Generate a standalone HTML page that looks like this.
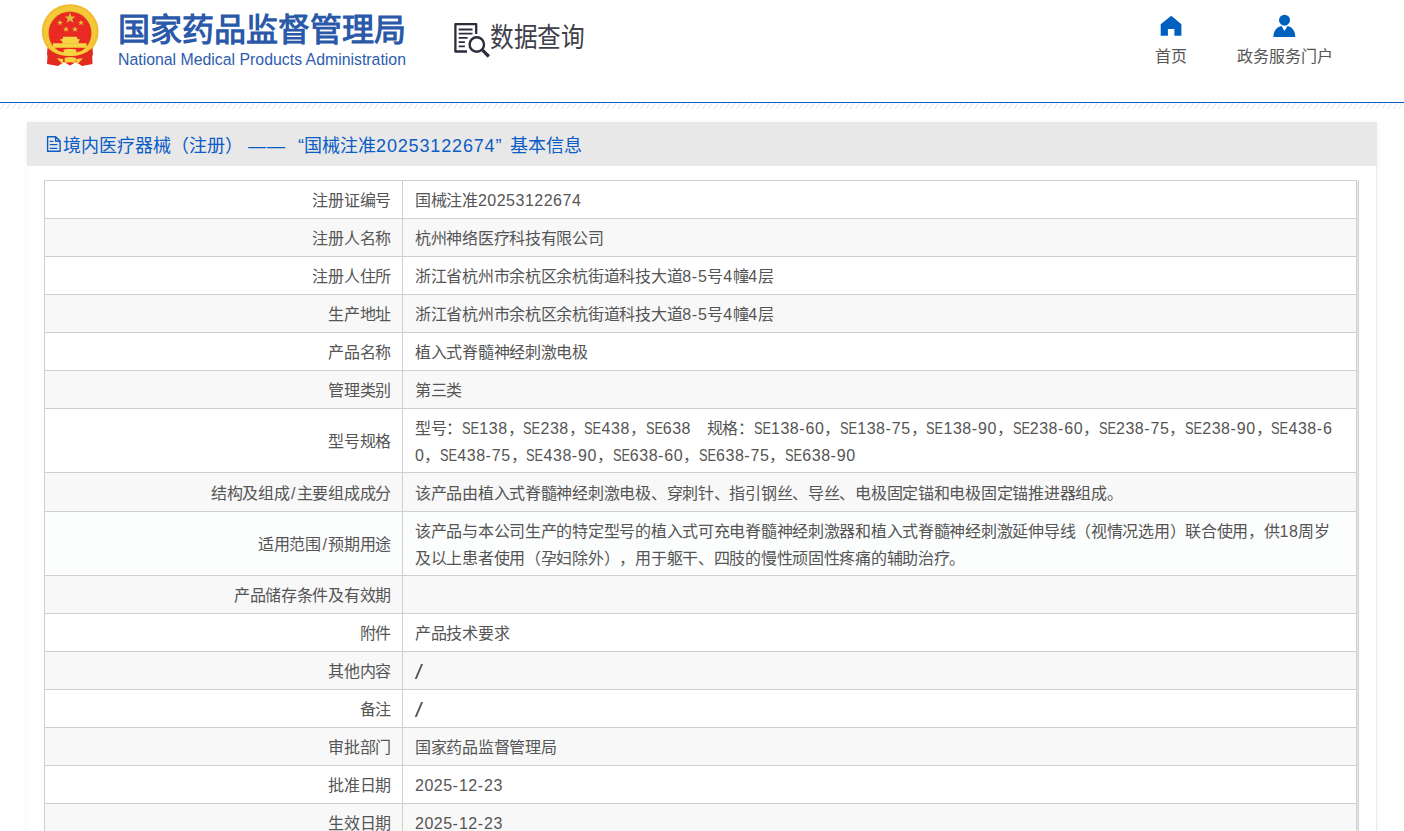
<!DOCTYPE html>
<html lang="zh-CN">
<head>
<meta charset="utf-8">
<style>
html,body{margin:0;padding:0;}
body{width:1404px;height:831px;overflow:hidden;background:#fff;font-family:"Liberation Sans",sans-serif;position:relative;text-spacing-trim:space-all;}
.abs{position:absolute;}
#title{position:absolute;left:118px;top:9.5px;font-size:32px;font-weight:900;color:#2a59a9;line-height:40px;white-space:nowrap;}
#entitle{position:absolute;left:118px;top:50.5px;font-size:15.85px;color:#2d5cae;line-height:18px;white-space:nowrap;}
#dq{position:absolute;left:490px;top:18.5px;font-size:26px;color:#40404a;line-height:36px;white-space:nowrap;transform:scale(0.91,1.04);transform-origin:0 0;}
.nav{position:absolute;top:48px;font-size:16px;color:#555;line-height:18px;white-space:nowrap;}
#panel{position:absolute;left:27px;top:122px;width:1349px;height:740px;background:#fff;box-shadow:0 0 6px rgba(0,0,0,0.05);border-right:1px solid #e9e9e9;}
#ph{position:absolute;left:0;top:0;width:1350px;height:44px;background:#e8e8e8;}
#phtxt{position:absolute;left:36px;top:11.5px;font-size:18px;color:#0b5cc4;line-height:24px;white-space:nowrap;}
.q{display:inline-block;width:18px;}
.dg{letter-spacing:0.85px;}
#tbl{position:absolute;left:17px;top:58px;border-collapse:collapse;width:1313px;table-layout:fixed;}
#tbl td{border:1px solid #d1ced1;font-size:16px;color:#555;line-height:26.5px;padding:7px 11px 3px 12px;word-break:break-all;letter-spacing:-0.28px;}
#tbl td.l{text-align:right;}
#tbl tr{height:38px;}
#tbl tr:nth-child(even) td{background:#f8f8f8;}
#tbl tr.hv td{background:#fcfdfd;}
.n{letter-spacing:0.5px;}
.h{letter-spacing:1px;}
.sl{padding:0 1.5px;}
.sv{display:inline-block;width:1.5px;height:14.5px;background:#555;transform:skewX(-23deg);vertical-align:-1.5px;margin-left:2.5px;}
b.se{display:inline-block;width:17.2px;font-weight:normal;letter-spacing:0;white-space:nowrap;}
b.se i{display:inline-block;font-style:normal;transform:scaleX(0.8);transform-origin:0 0;}
#rb1{position:absolute;left:1330px;top:59px;width:1px;height:720px;background:#e3e7ef;}
#rb2{position:absolute;left:1331px;top:58px;width:1px;height:720px;background:#d1ced1;}
</style>
</head>
<body>
<svg class="abs" style="left:0;top:0" width="1404" height="110" viewBox="0 0 1404 110">
  <defs>
    <pattern id="hp" x="0" y="103" width="5.66" height="6" patternUnits="userSpaceOnUse">
      <line x1="5.2" y1="0" x2="0.7" y2="6" stroke="#e4e4e4" stroke-width="1"/>
    </pattern>
  </defs>
  <rect x="0" y="103" width="1404" height="6" fill="url(#hp)"/>
  <rect x="0" y="102" width="1404" height="1" fill="#0a60c2"/>
  <!-- emblem -->
  <g>
    <path d="M48,48 L47,64 L58,66 L64,62 L70,65.5 L76,62 L82,66 L92.5,64 L92,48 Z" fill="#e42a1f"/>
    <ellipse cx="70.2" cy="31.5" rx="28.4" ry="27.3" fill="#f0bb2e"/>
    <ellipse cx="70.2" cy="31.5" rx="26.5" ry="25.5" fill="#f5c83a"/>
    <circle cx="70" cy="33" r="21.9" fill="#d8b82a"/>
    <circle cx="70" cy="33" r="21.3" fill="#e92a22"/>
    <path d="M47.5,48 Q58,57 70,56 Q82,57 92.5,48 L93,55 Q84,60 76,59.5 L70,61 L64,59.5 Q56,60 47,55 Z" fill="#e42a1f"/>
    <path d="M48.5,47 Q58,55.5 70,55.5 Q82,55.5 91.5,47 L90.5,45.5 Q82,53 70,53 Q58,53 49.5,45.5 Z" fill="#f4cf3a"/>
    <g fill="#dcc23a">
      <polygon points="70,12.5 71.4,16.4 75.4,16.5 72.2,18.9 73.4,22.8 70,20.5 66.6,22.8 67.8,18.9 64.6,16.5 68.6,16.4"/>
      <polygon points="60,19.8 60.8,21.8 62.9,21.9 61.2,23.2 61.9,25.3 60,24.1 58.1,25.3 58.8,23.2 57.1,21.9 59.2,21.8"/>
      <polygon points="81,19.8 81.8,21.8 83.9,21.9 82.2,23.2 82.9,25.3 81,24.1 79.1,25.3 79.8,23.2 78.1,21.9 80.2,21.8"/>
      <polygon points="66,26.3 66.8,28.3 68.9,28.4 67.2,29.7 67.9,31.8 66,30.6 64.1,31.8 64.8,29.7 63.1,28.4 65.2,28.3"/>
      <polygon points="75,26.3 75.8,28.3 77.9,28.4 76.2,29.7 76.9,31.8 75,30.6 73.1,31.8 73.8,29.7 72.1,28.4 74.2,28.3"/>
    </g>
    <g fill="#f7d444">
      <path d="M63.2,36.8 H76.9 L77.5,39 H79.6 L79.2,41 H78.7 V43.5 H62.3 V41 H60.9 L60.5,39 H62.6 Z"/>
      <path d="M53,43.3 H86.5 L86.8,47.8 H53.2 Z"/>
      <path d="M63.5,50 Q66,48.5 70,49 Q74,48.5 76.5,50 L76,55.5 Q73,54.5 70,56 Q67,54.5 64,55.5 Z"/>
      <path d="M64.6,58 Q70,56 76,58 L75.5,62.8 Q70,61.5 64.8,62.8 Z"/>
      <path d="M56.8,58.3 L63.2,59 L62.8,64.3 Z M76,59 L82.9,58.3 L77.2,64.3 Z"/>
    </g>
  </g>
  <!-- data query icon -->
  <g fill="none" stroke="#2c2c3c" stroke-linecap="butt">
    <path d="M476.2,34 V24.2 H455.4 V51.5 H467" stroke-width="2.3" stroke-linejoin="round"/>
    <path d="M458.7,29.5 H472.5 M458.7,33.7 H472.5 M458.7,37.9 H467.6 M458.7,42.1 H464.9 M458.7,46.3 H464.9" stroke-width="1.8"/>
    <circle cx="476.8" cy="44.5" r="7.2" stroke-width="2.4"/>
    <path d="M482.5,50.2 L488.8,56.5" stroke-width="3.2"/>
  </g>
  <!-- home -->
  <path d="M1171.3,15.8 L1181.4,24.2 V35.8 H1174.4 V28.9 H1167.9 V35.8 H1160.7 V24.2 Z" fill="#0060c0"/>
  <!-- person -->
  <circle cx="1284.5" cy="20.2" r="5.5" fill="#0060c0"/>
  <path d="M1273.4,36.9 C1273.4,30.5 1277.5,26.8 1281.5,26.1 L1284.5,31 L1287.5,26.1 C1291.5,26.8 1295.3,30.5 1295.3,36.9 Z" fill="#0060c0"/>
</svg>
<div id="title">国家药品监督管理局</div>
<div id="entitle">National Medical Products Administration</div>
<div id="dq">数据查询</div>
<div class="nav" style="left:1155px">首页</div>
<div class="nav" style="left:1237px">政务服务门户</div>
<div id="panel">
  <div id="ph">
    <svg class="abs" style="left:19px;top:13px" width="16" height="18" viewBox="0 0 16 18">
      <path d="M1.6,1.7 H9.6 L14.1,6 V16.2 H1.6 Z M9.6,1.7 V6.3 H14.1" fill="none" stroke="#0b5cc4" stroke-width="1.4" stroke-linejoin="round"/>
      <path d="M4.2,6.4 H7 M4.2,9.6 H11 M4.2,13.3 H11" stroke="#0b5cc4" stroke-width="1.2" stroke-linecap="round"/>
    </svg>
    <div id="phtxt">境内医疗器械（注册） <span style="letter-spacing:1px">——</span><span class="q" style="text-align:right">“</span>国械注准<span class="dg">20253122674</span><span class="q" style="width:15px">”</span>基本信息</div>
  </div>
  <table id="tbl">
    <colgroup><col style="width:358px"><col></colgroup>
    <tr><td class="l">注册证编号</td><td>国械注准<span class="n">20253122674</span></td></tr>
    <tr><td class="l">注册人名称</td><td>杭州神络医疗科技有限公司</td></tr>
    <tr><td class="l">注册人住所</td><td>浙江省杭州市余杭区余杭街道科技大道<span class="n">8<span class="h">-</span>5</span>号<span class="n">4</span>幢<span class="n">4</span>层</td></tr>
    <tr><td class="l">生产地址</td><td>浙江省杭州市余杭区余杭街道科技大道<span class="n">8<span class="h">-</span>5</span>号<span class="n">4</span>幢<span class="n">4</span>层</td></tr>
    <tr><td class="l">产品名称</td><td>植入式脊髓神经刺激电极</td></tr>
    <tr><td class="l">管理类别</td><td>第三类</td></tr>
    <tr><td class="l">型号规格</td><td>型号：<b class="se"><i>SE</i></b><span class="n">138</span>，<b class="se"><i>SE</i></b><span class="n">238</span>，<b class="se"><i>SE</i></b><span class="n">438</span>，<b class="se"><i>SE</i></b><span class="n">638</span>　规格：<b class="se"><i>SE</i></b><span class="n">138<span class="h">-</span>60</span>，<b class="se"><i>SE</i></b><span class="n">138<span class="h">-</span>75</span>，<b class="se"><i>SE</i></b><span class="n">138<span class="h">-</span>90</span>，<b class="se"><i>SE</i></b><span class="n">238<span class="h">-</span>60</span>，<b class="se"><i>SE</i></b><span class="n">238<span class="h">-</span>75</span>，<b class="se"><i>SE</i></b><span class="n">238<span class="h">-</span>90</span>，<b class="se"><i>SE</i></b><span class="n">438<span class="h">-</span>6</span><br><span class="n">0</span>，<b class="se"><i>SE</i></b><span class="n">438<span class="h">-</span>75</span>，<b class="se"><i>SE</i></b><span class="n">438<span class="h">-</span>90</span>，<b class="se"><i>SE</i></b><span class="n">638<span class="h">-</span>60</span>，<b class="se"><i>SE</i></b><span class="n">638<span class="h">-</span>75</span>，<b class="se"><i>SE</i></b><span class="n">638<span class="h">-</span>90</span></td></tr>
    <tr style="height:39px"><td class="l">结构及组成<span class="sl">/</span>主要组成成分</td><td>该产品由植入式脊髓神经刺激电极、穿刺针、指引钢丝、导丝、电极固定锚和电极固定锚推进器组成。</td></tr>
    <tr class="hv"><td class="l">适用范围<span class="sl">/</span>预期用途</td><td>该产品与本公司生产的特定型号的植入式可充电脊髓神经刺激器和植入式脊髓神经刺激延伸导线（视情况选用）联合使用，供<span class="n">18</span>周岁<br>及以上患者使用（孕妇除外），用于躯干、四肢的慢性顽固性疼痛的辅助治疗。</td></tr>
    <tr><td class="l">产品储存条件及有效期</td><td></td></tr>
    <tr><td class="l">附件</td><td>产品技术要求</td></tr>
    <tr><td class="l">其他内容</td><td><i class="sv"></i></td></tr>
    <tr><td class="l">备注</td><td><i class="sv"></i></td></tr>
    <tr><td class="l">审批部门</td><td>国家药品监督管理局</td></tr>
    <tr><td class="l">批准日期</td><td><span class="n">2025<span class="h">-</span>12<span class="h">-</span>23</span></td></tr>
    <tr><td class="l">生效日期</td><td><span class="n">2025<span class="h">-</span>12<span class="h">-</span>23</span></td></tr>
  </table>
  <div id="rb1"></div><div id="rb2"></div>
</div>
</body>
</html>
